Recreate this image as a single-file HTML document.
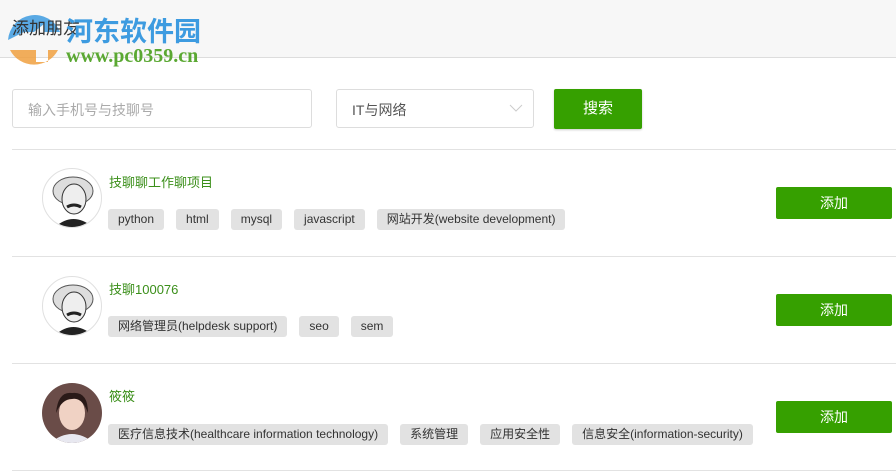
<!DOCTYPE html><html><head><meta charset="utf-8"><style>
*{margin:0;padding:0;box-sizing:border-box}
body{width:896px;height:472px;background:#fff;font-family:"Liberation Sans","Noto Sans CJK SC",sans-serif;position:relative;overflow:hidden;color:#333}
.hd{position:absolute;left:0;top:0;width:896px;height:58px;background:#f7f7f7;border-bottom:1px solid #ddd}
.t{position:absolute;left:12px;top:14px;font-size:17px;color:#333}
.logo{position:absolute;left:66px;top:10px;font-size:27px;font-weight:bold;color:#3d9be0;letter-spacing:0}
.url{position:absolute;left:66px;top:45px;font-family:"Liberation Serif",serif;font-weight:bold;font-size:20px;color:#5aa832}
.inp{position:absolute;left:12px;top:89px;width:300px;height:39px;border:1px solid #ddd;border-radius:3px;font-size:14px;color:#aaa;padding:10px 15px}
.sel{position:absolute;left:336px;top:89px;width:198px;height:39px;border:1px solid #ddd;border-radius:3px;font-size:14px;color:#555;padding:10px 15px}
.sel svg{position:absolute;right:10px;top:14px}
.sb{position:absolute;left:554px;top:89px;width:88px;height:40px;background:#36a000;border-radius:2px;color:#fff;font-size:15px;text-align:center;line-height:40px;box-shadow:0 1px 2px rgba(0,0,0,.2)}
.line{position:absolute;left:12px;width:884px;height:1px;background:#e2e2e2}
.av{position:absolute;left:42px;width:60px;height:60px;border-radius:50%;border:1px solid #e0e0e0;overflow:hidden;background:#fff}
.nm{position:absolute;left:109px;font-size:13px;color:#3b8f1a}
.tags{position:absolute;left:108px;display:flex;gap:12px}
.tag{background:#e2e2e2;border-radius:3px;height:21px;line-height:21px;padding:0 10px;font-size:12px;color:#333}
.add{position:absolute;left:776px;width:116px;height:32px;background:#36a000;border-radius:2px;color:#fff;font-size:14px;text-align:center;line-height:32px}
</style></head><body>
<div class="hd"></div>
<svg style="position:absolute;left:4px;top:10px" width="60" height="60"><path d="M4 30 A27 27 0 0 1 56 22 L40 22 L40 14 L30 22 L20 22 Z" fill="#3d9be0" opacity=".85"/><path d="M6 40 A27 27 0 0 0 54 40 L44 40 L44 52 L32 52 L32 40 Z" fill="#f0a040" opacity=".85"/></svg>
<div class="t">添加朋友</div>
<div class="logo">河东软件园</div>
<div class="url">www.pc0359.cn</div>
<div class="inp">输入手机号与技聊号</div>
<div class="sel">IT与网络<svg width="14" height="8"><path d="M1 1 L7 7 L13 1" stroke="#ccc" fill="none"/></svg></div>
<div class="sb">搜索</div>
<div class="line" style="top:149px"></div>
<div class="line" style="top:256px"></div>
<div class="line" style="top:363px"></div>
<div class="line" style="top:470px"></div>

<div class="av" style="top:168px"><svg width="60" height="60"><ellipse cx="30" cy="22" rx="20" ry="14" fill="#ddd" stroke="#555"/><ellipse cx="31" cy="30" rx="12" ry="15" fill="#eee" stroke="#333"/><path d="M10 60 Q30 40 52 60" fill="#222"/><path d="M24 38 Q31 34 38 38" stroke="#222" stroke-width="3" fill="none"/></svg></div>
<div class="nm" style="top:172px">技聊聊工作聊项目</div>
<div class="tags" style="top:209px"><span class="tag">python</span><span class="tag">html</span><span class="tag">mysql</span><span class="tag">javascript</span><span class="tag">网站开发(website development)</span></div>
<div class="add" style="top:187px">添加</div>

<div class="av" style="top:276px"><svg width="60" height="60"><ellipse cx="30" cy="22" rx="20" ry="14" fill="#ddd" stroke="#555"/><ellipse cx="31" cy="30" rx="12" ry="15" fill="#eee" stroke="#333"/><path d="M10 60 Q30 40 52 60" fill="#222"/><path d="M24 38 Q31 34 38 38" stroke="#222" stroke-width="3" fill="none"/></svg></div>
<div class="nm" style="top:279px">技聊100076</div>
<div class="tags" style="top:316px"><span class="tag">网络管理员(helpdesk support)</span><span class="tag">seo</span><span class="tag">sem</span></div>
<div class="add" style="top:294px">添加</div>

<div class="av" style="top:383px;border:none"><svg width="60" height="60"><rect width="60" height="60" fill="#6a4c48"/><ellipse cx="30" cy="30" rx="13" ry="17" fill="#f0d2c4"/><path d="M8 60 Q30 42 52 60" fill="#e8e8f0"/><path d="M14 30 Q16 8 30 10 Q46 8 46 30 Q40 14 30 16 Q20 16 14 30" fill="#2a1a18"/></svg></div>
<div class="nm" style="top:386px">筱筱</div>
<div class="tags" style="top:424px"><span class="tag">医疗信息技术(healthcare information technology)</span><span class="tag">系统管理</span><span class="tag">应用安全性</span><span class="tag">信息安全(information-security)</span></div>
<div class="add" style="top:401px">添加</div>
</body></html>
